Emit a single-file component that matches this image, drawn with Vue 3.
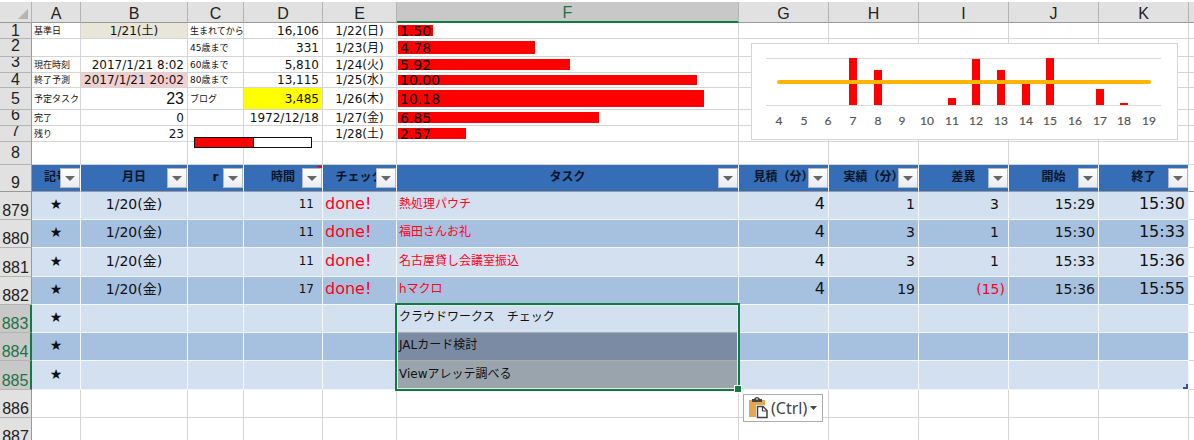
<script setup>
const columns = ['A', 'B', 'C', 'D', 'E', 'F', 'G', 'H', 'I', 'J', 'K', '']
const fields = ['A', 'B', 'C', 'D', 'E', 'F', 'G', 'H', 'I', 'J', 'K', 'L']

const summary = [
  { n: 1, h: 16, A: '基準日', B: '1/21(土)', C: '生まれてから', D: '16,106', E: '1/22(日)', F: '1.50', bar: 35 },
  { n: 2, h: 18, C: '45歳まで', D: '331', E: '1/23(月)', F: '4.78', bar: 137 },
  { n: 3, h: 16, A: '現在時刻', B: '2017/1/21 8:02', C: '60歳まで', D: '5,810', E: '1/24(火)', F: '5.92', bar: 172 },
  { n: 4, h: 15, A: '終了予測', B: '2017/1/21 20:02', C: '80歳まで', D: '13,115', E: '1/25(水)', F: '10.00', bar: 299 },
  { n: 5, h: 22, A: '予定タスク', B: '23', C: 'ブログ', D: '3,485', E: '1/26(木)', F: '10.18', bar: 306 },
  { n: 6, h: 16, A: '完了', B: '0', D: '1972/12/18', E: '1/27(金)', F: '6.85', bar: 201 },
  { n: 7, h: 16, A: '残り', B: '23', E: '1/28(土)', F: '2.57', bar: 68 },
  { n: 8, h: 23 }
]
const titles = ['記号', '月日', 'r', '時間', 'チェック', 'タスク', '見積（分）', '実績（分）', '差異', '開始', '終了']
const tasks = [
  { n: 879, h: 28, A: '★', B: '1/20(金)', D: '11', E: 'done!', F: '熱処理パウチ', G: '4', H: '1', I: '3', J: '15:29', K: '15:30' },
  { n: 880, h: 28, A: '★', B: '1/20(金)', D: '11', E: 'done!', F: '福田さんお礼', G: '4', H: '3', I: '1', J: '15:30', K: '15:33' },
  { n: 881, h: 29, A: '★', B: '1/20(金)', D: '11', E: 'done!', F: '名古屋貸し会議室振込', G: '4', H: '3', I: '1', J: '15:33', K: '15:36' },
  { n: 882, h: 28, A: '★', B: '1/20(金)', D: '17', E: 'done!', F: 'hマクロ', G: '4', H: '19', I: '(15)', J: '15:36', K: '15:55' },
  { n: 883, h: 28, A: '★', F: 'クラウドワークス　チェック', selected: true },
  { n: 884, h: 28, A: '★', F: 'JALカード検討', selected: true },
  { n: 885, h: 29, A: '★', F: 'Viewアレッテ調べる', selected: true }
]
const blanks = [{ n: 886, h: 28 }, { n: 887, h: 28 }]

const hours = Array.from({ length: 16 }, (_, i) => ({ label: i + 4, x: 28 + Math.round((i * 370) / 15) }))
const hourBars = [
  [7, 47], [8, 35], [11, 7], [12, 46], [13, 35], [14, 22], [15, 47], [17, 16], [18, 2]
].map(([hour, height]) => ({ x: hours[hour - 4].x - 4, height }))
</script>

<template>
  <main class="sheet">
    <table>
      <colgroup>
        <col class="w-head" /><col class="w-a" /><col class="w-b" /><col class="w-c" /><col class="w-d" /><col class="w-e" /><col />
        <col v-for="i in 5" :key="i" class="w-g" /><col class="w-l" />
      </colgroup>
      <thead>
        <tr>
          <th class="corner"><svg width="10" height="10" viewBox="0 0 10 10"><path d="M10 0V10H0Z" fill="#b4b4b4" /></svg></th>
          <th v-for="(c, i) in columns" :key="i" scope="col" :class="{ active: c === 'F' }">{{ c }}</th>
        </tr>
      </thead>
      <tbody class="summary">
        <tr v-for="r in summary" :key="r.n" :class="'r' + r.n" :style="{ '--h': r.h + 'px' }">
          <th scope="row"><div class="c">{{ r.n }}</div></th>
          <td v-for="f in fields" :key="f" :class="'f' + f">
            <div v-if="f === 'F' && r.bar" class="bar" :style="{ width: (r.bar / 341) * 100 + '%' }"></div>
            <div class="c">{{ r[f] }}</div>
            <div v-if="f === 'C' && r.n === 7" class="progress"><div class="done"></div></div>
            <svg v-if="f === 'G' && r.n === 2" class="chart" width="427" height="97" viewBox="0 0 427 97">
              <rect x="0.5" y="0.5" width="426" height="96" fill="#fff" stroke="#d4d4d4" />
              <path d="M15 15.5H410M15 62.5H410" stroke="#d9d9d9" />
              <rect v-for="b in hourBars" :key="b.x" :x="b.x" :y="62 - b.height" width="8" :height="b.height" fill="#f00" />
              <path d="M28 39H398" stroke="#ffb400" stroke-width="4" stroke-linecap="round" />
              <text v-for="t in hours" :key="t.label" :x="t.x" y="82" text-anchor="middle">{{ t.label }}</text>
            </svg>
          </td>
        </tr>
      </tbody>
      <tbody class="tasks">
        <tr class="titles" :style="{ '--h': '27px' }">
          <th scope="row"><div class="c">9</div></th>
          <td v-for="(t, i) in titles" :key="t">
            <div class="c">{{ t }}</div>
            <svg v-if="i === 3" class="note" width="6" height="3" viewBox="0 0 6 3"><path d="M0 0H6V3Z" fill="#f00" /></svg>
            <button type="button" class="filter" :aria-label="t">
              <svg width="10" height="5" viewBox="0 0 10 5"><path d="M0 0H10L5 5Z" fill="#666" /></svg>
            </button>
          </td>
          <td class="fL"></td>
        </tr>
        <tr v-for="(r, i) in tasks" :key="r.n" :class="['r' + r.n, i % 2 ? 'dark' : 'light', { selected: r.selected }]" :style="{ '--h': r.h + 'px' }">
          <th scope="row"><div class="c">{{ r.n }}</div></th>
          <td v-for="f in fields" :key="f" :class="['f' + f, { negative: f === 'I' && r.n === 882 }]">
            <div class="c">{{ r[f] }}</div>
            <div v-if="f === 'F' && r.n === 883" class="range"><span class="handle"></span></div>
            <svg v-if="f === 'K' && r.n === 885" class="resize" width="5" height="5" viewBox="0 0 5 5"><path d="M3 0H5V5H0V3H3Z" fill="#3a4db0" /></svg>
          </td>
        </tr>
      </tbody>
      <tbody>
        <tr v-for="r in blanks" :key="r.n" class="blank" :style="{ '--h': r.h + 'px' }">
          <th scope="row"><div class="c">{{ r.n }}</div></th>
          <td v-for="f in fields" :key="f" :class="'f' + f">
            <button v-if="f === 'G' && r.n === 886" type="button" class="paste">
              <svg width="20" height="22" viewBox="0 0 20 22">
                <path d="M1 3H17V20H1Z" fill="#e3a751" />
                <path d="M4 2H6Q7 0 9 0Q11 0 12 2H14V5H4Z" fill="#444" />
                <path d="M8 1.500H10V2.500H8Z" fill="#fff" />
                <path d="M8 8H16L20 12V22H8Z" fill="#fff" />
                <path d="M9.500 9.500H15L19 13.500V20.500H9.500Z" fill="#fff" stroke="#444" stroke-width="1.500" />
                <path d="M14.500 10V14H19" fill="none" stroke="#444" stroke-width="1.200" />
              </svg>
              <span>(Ctrl)</span>
              <svg width="7" height="4" viewBox="0 0 7 4"><path d="M0 0H7L3.500 4Z" fill="#444" /></svg>
            </button>
          </td>
        </tr>
      </tbody>
    </table>
  </main>
</template>

<style>
html, body { margin: 0; overflow: hidden; background: #fff; }
</style>

<style scoped>
.sheet {
  height: 100vh;
  box-sizing: border-box;
  padding-top: 2px;
  overflow: hidden;
  color: #111;
  font-family: "DejaVu Sans", "Noto Sans CJK JP", sans-serif;
  font-size: 12px;
}
table { width: 100%; table-layout: fixed; border-collapse: separate; border-spacing: 0; }
.w-head { width: 32px; }
.w-a { width: 49px; }
.w-b { width: 107px; }
.w-c { width: 56px; }
.w-d { width: 79px; }
.w-e { width: 74px; }
.w-g { width: 90px; }
.w-l { width: 5px; }
th, td { padding: 0; position: relative; border: solid #d4d4d4; border-width: 0 1px 1px 0; }
th {
  background: #e1e1e1;
  border-color: #b4b4b4;
  font: 16px "Liberation Sans", Arial, sans-serif;
  color: #222;
}
thead th { height: 17px; line-height: 17px; padding-top: 3px; border-bottom-color: #999; text-align: center; }
thead .corner { line-height: 0; text-align: right; vertical-align: bottom; padding: 0 3px 3px 0; }
thead .active { height: 16px; line-height: 16px; background: #c8c8c8; color: #217346; border-bottom: 2px solid #107c41; }
thead th:last-child, .fL { border-right-width: 0; }
tbody th { border-right-color: #999; }
.c {
  display: flex;
  align-items: center;
  box-sizing: border-box;
  height: calc(var(--h) - 1px);
  line-height: 14px;
  overflow: hidden;
  white-space: nowrap;
}
th .c { justify-content: center; line-height: 16px; }
.r2 th .c { align-items: flex-start; line-height: 14px; }
.r4 th .c { line-height: 14px; }
.r3 th .c, .r6 th .c, .r7 th .c { align-items: flex-start; line-height: 10px; }

.summary .fA .c, .summary .fC .c { font-size: 9px; padding-left: 2px; }
.summary .fB .c, .summary .fD .c { justify-content: flex-end; padding-right: 3px; }
.summary .fE .c { justify-content: center; }
.summary .fF .c { position: relative; padding-left: 3px; font-size: 14px; }
.r1 .fB { background: #e8e6d9; }
.summary .r1 .fB .c { justify-content: center; padding-right: 0; }
.r4 .fB { background: #f2cfce; }
.r5 .fD { background: #ff0; }
.summary .r5 .fB .c { font: 16px "Liberation Sans", Arial, sans-serif; }
.bar { position: absolute; left: 1px; top: 2px; bottom: 2px; background: #f00; }
.progress {
  position: absolute;
  z-index: 2;
  left: 6px;
  top: 11px;
  width: 118px;
  height: 11px;
  box-sizing: border-box;
  border: 1px solid #111;
  background: #fff;
}
.done { width: 51%; height: 100%; box-sizing: border-box; border-right: 1px solid #111; background: #f00; }
.chart { position: absolute; z-index: 2; left: 12px; top: 4px; font: 12px Lato, sans-serif; }
.chart text { fill: #555; stroke: #555; stroke-width: 0.2; }

.tasks td { border-color: #f4f8fc; }
.titles td { background: #356db6; border-bottom-color: #999; }
.titles th { border-bottom-color: #999; }
.tasks .titles td .c { justify-content: center; padding-bottom: 2px; font-weight: bold; color: #0b1526; }
.tasks th .c, .blank th .c { align-items: flex-end; }
.filter {
  position: absolute;
  right: 0;
  bottom: 3px;
  width: 20px;
  height: 20px;
  padding: 0;
  display: flex;
  align-items: center;
  justify-content: center;
  border: 1px solid #b4b8c0;
  background: linear-gradient(#fff, #e8ebf1);
}
.note { position: absolute; right: 0; top: 1px; }
.light td { background: #d3e0f0; }
.dark td { background: #a6c0df; }
.tasks td.fL { background: #fff; border-color: #d4d4d4; }
.tasks .titles td.fL { border-bottom-color: #999; }
.tasks td .c { padding-bottom: 3px; }
.tasks .fA .c { justify-content: center; font-size: 14px; }
.tasks .fB .c { justify-content: center; font-size: 14px; }
.tasks .fD .c { justify-content: flex-end; padding-right: 8px; }
.tasks .fE .c { padding-left: 2px; font-size: 16px; color: #ff0022; }
.tasks .fF .c { padding-left: 2px; color: #ff0022; }
.tasks .fG .c, .tasks .fH .c, .tasks .fJ .c, .tasks .fK .c { justify-content: flex-end; padding-right: 3px; }
.tasks .fG .c, .tasks .fK .c { font-size: 16px; }
.tasks .fH .c, .tasks .fI .c, .tasks .fJ .c { font-size: 14px; }
.tasks .fI .c { justify-content: flex-end; padding-right: 9px; }
.tasks .negative .c { color: #ff0022; padding-right: 3px; }
.selected th { background: #c8c8c8; color: #217346; border-right: 2px solid #107c41; }
.tasks .selected .fF .c { color: #111; }
.tasks .r883 .fF { border-bottom-color: #a8adb2; }
.tasks .r884 .fF { background: #7a8ba3; border-bottom-color: #b0aca8; }
.tasks .r885 .fF { background: #9aa4ad; }
.range {
  position: absolute;
  z-index: 2;
  left: -2px;
  top: -2px;
  width: calc(100% + 4px);
  height: 88px;
  box-sizing: border-box;
  border: 2px solid #107c41;
  box-shadow: inset 0 0 0 1px #e4ece9;
}
.handle { position: absolute; right: -4px; bottom: -4px; width: 6px; height: 6px; border: 1px solid #fff; background: #107c41; }
.resize { position: absolute; right: 0; bottom: 0; }
.blank td { vertical-align: top; }
.paste {
  position: absolute;
  z-index: 2;
  left: 4px;
  top: 4px;
  width: 80px;
  height: 28px;
  box-sizing: border-box;
  display: flex;
  align-items: center;
  gap: 3px;
  padding: 0 4px;
  border: 1px solid #ababab;
  background: #fdfdfd;
  color: #444;
  font: 16px "Noto Sans", sans-serif;
}
.paste svg { flex: none; }
</style>
